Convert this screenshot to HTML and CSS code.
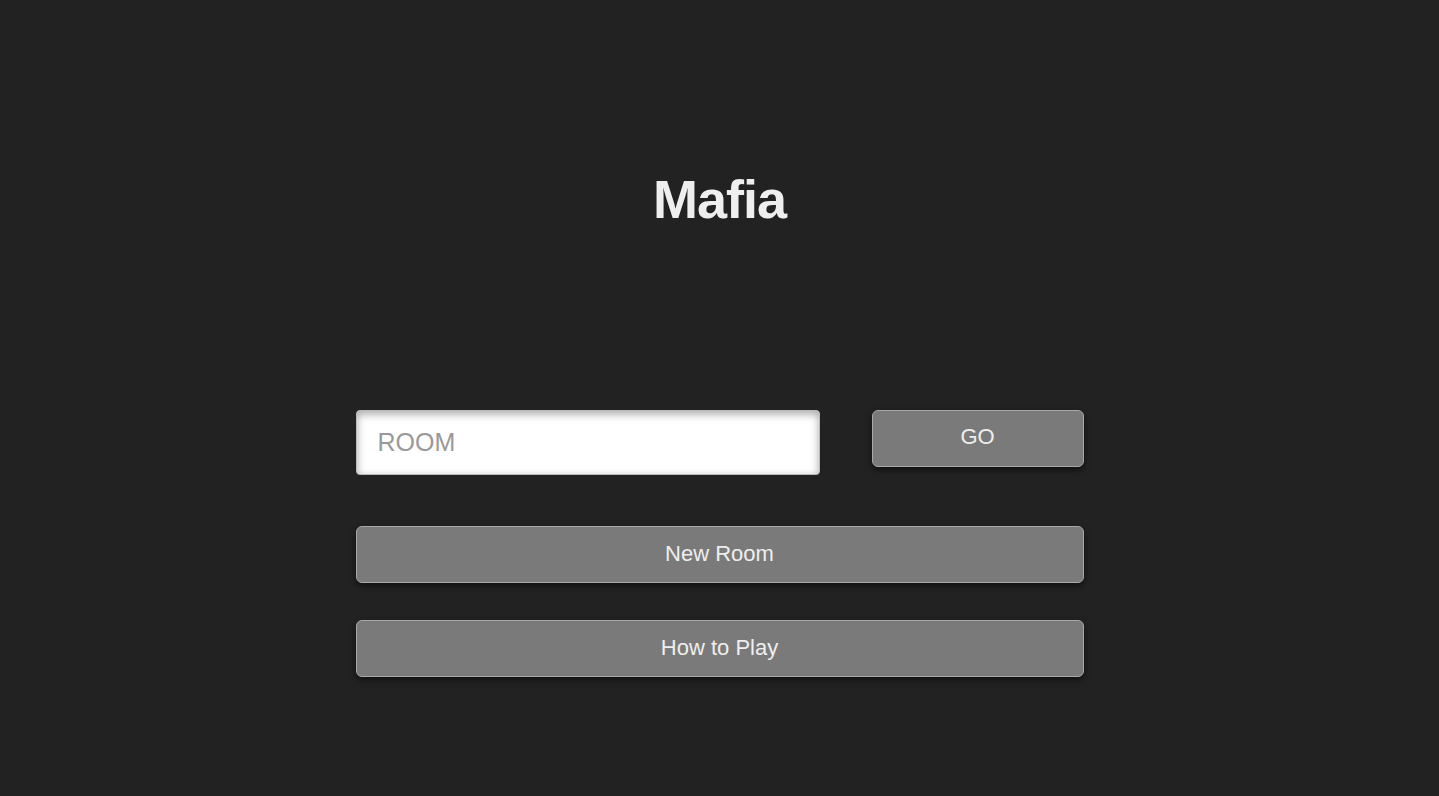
FILE: index.html
```html
<!DOCTYPE html>
<html>
<head>
<meta charset="utf-8">
<link rel="stylesheet" href="styles.css">
<title>Mafia</title>
</head>
<body>
<main class="page">
  <h1 class="title">Mafia</h1>
  <div class="panel">
    <div class="join-row">
      <input class="room-input" type="text" placeholder="ROOM">
      <button class="btn btn-go">GO</button>
    </div>
    <button class="btn btn-wide">New Room</button>
    <button class="btn btn-wide">How to Play</button>
  </div>
</main>
</body>
</html>
```
FILE: styles.css
```css
html, body {
  margin: 0;
  padding: 0;
  background: #222222;
  height: 100%;
}
body {
  font-family: "Liberation Sans", Arial, sans-serif;
  color: #eeeeee;
}
.page {
  display: flex;
  flex-direction: column;
  align-items: center;
  padding-top: 166px;
}
.title {
  margin: 0;
  font-size: 54px;
  line-height: 66px;
  font-weight: bold;
  color: #eeeeee;
  letter-spacing: -1px;
}
.panel {
  width: 728px;
  margin-top: 178px;
  display: flex;
  flex-direction: column;
  gap: 37px;
}
.join-row {
  display: flex;
  align-items: flex-start;
  gap: 52px;
  margin-bottom: 14px;
}
.room-input {
  box-sizing: border-box;
  width: 464px;
  height: 65px;
  border: 1px solid #bbbbbb;
  border-radius: 4px;
  background: #ffffff;
  box-shadow: inset 0 3px 8px rgba(0,0,0,0.35);
  padding: 0 21px;
  font-family: "Liberation Sans", Arial, sans-serif;
  font-size: 25px;
  color: #333;
  outline: none;
}
.room-input::placeholder {
  color: #999999;
}
.btn {
  box-sizing: border-box;
  height: 57px;
  background: #7a7a7a;
  border: 1px solid #a8a8a8;
  border-radius: 6px;
  color: #eeeeee;
  font-family: "Liberation Sans", Arial, sans-serif;
  font-size: 22px;
  box-shadow: 0 3px 6px rgba(0,0,0,0.55);
  padding: 0 0 2px;
  cursor: pointer;
}
.btn-go {
  width: 212px;
  height: 57px;
  padding-bottom: 4px;
}
.btn-wide {
  width: 728px;
}
```
